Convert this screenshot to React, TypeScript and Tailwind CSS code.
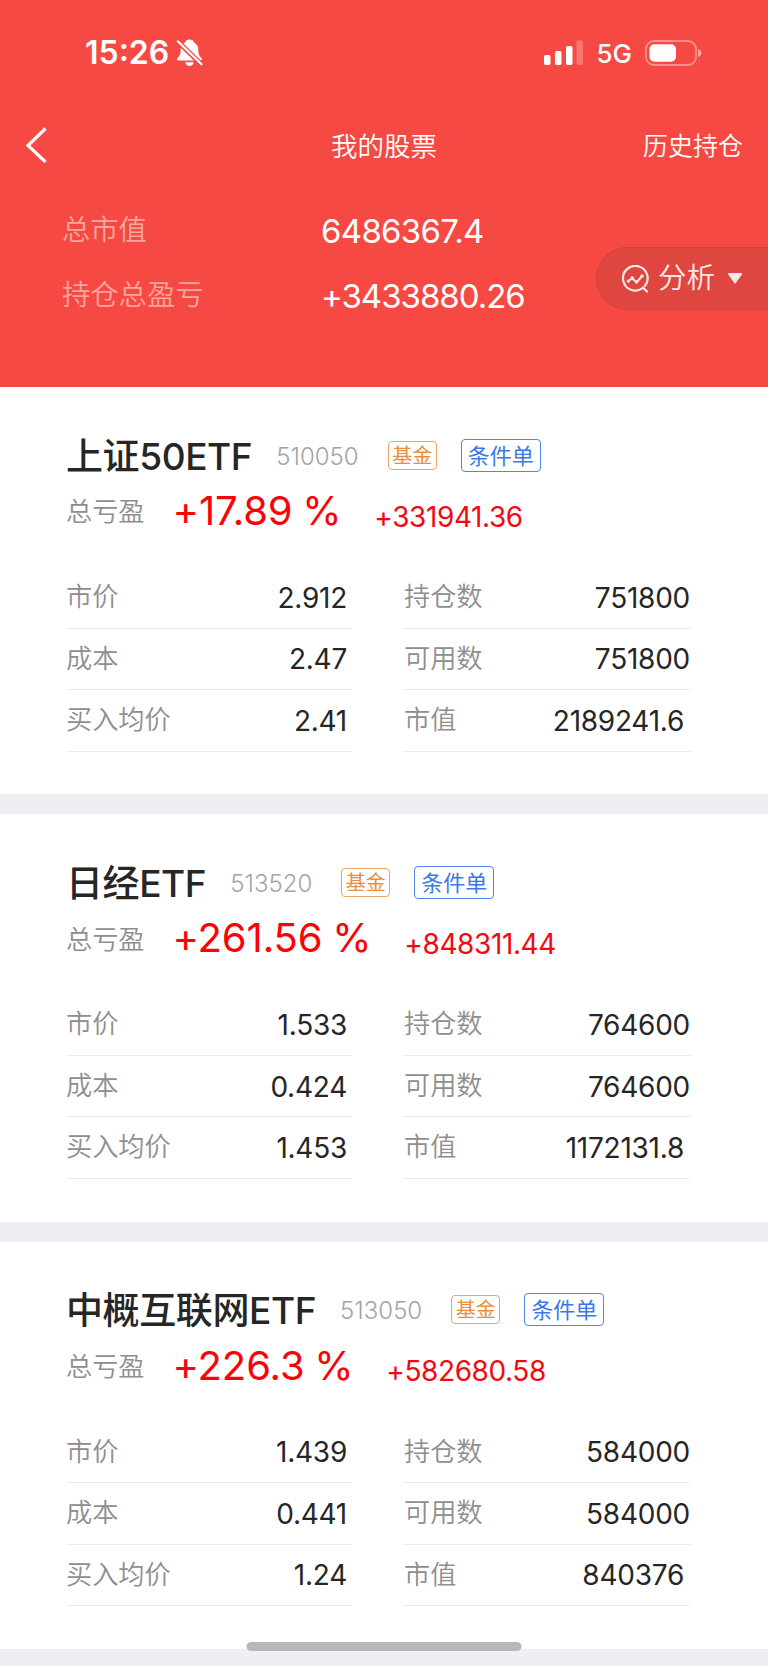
import clsx from 'clsx'

type Holding = {
  name: string
  code: string
  percent: string
  profit: string
  left: [string, string][]
  right: [string, string][]
}

const holdings: Holding[] = [
  {
    name: '上证50ETF',
    code: '510050',
    percent: '+17.89 %',
    profit: '+331941.36',
    left: [['市价', '2.912'], ['成本', '2.47'], ['买入均价', '2.41']],
    right: [['持仓数', '751800'], ['可用数', '751800'], ['市值', '2189241.6']],
  },
  {
    name: '日经ETF',
    code: '513520',
    percent: '+261.56 %',
    profit: '+848311.44',
    left: [['市价', '1.533'], ['成本', '0.424'], ['买入均价', '1.453']],
    right: [['持仓数', '764600'], ['可用数', '764600'], ['市值', '1172131.8']],
  },
  {
    name: '中概互联网ETF',
    code: '513050',
    percent: '+226.3 %',
    profit: '+582680.58',
    left: [['市价', '1.439'], ['成本', '0.441'], ['买入均价', '1.24']],
    right: [['持仓数', '584000'], ['可用数', '584000'], ['市值', '840376']],
  },
]

function StatusBar() {
  return (
    <div className="flex h-[105px] items-center pl-[85px] pr-[66px]">
      <span className="text-[32px] font-semibold leading-none">15:26</span>
      <svg className="ml-[7px]" width="27" height="28" viewBox="0 0 27 28">
        <path
          d="M13.500 .5c-2.300 0-4.100 1.300-4.600 3.100C6 5.200 4.700 7.800 4.700 11c0 4.600-1.200 6-3 7.800-1 1-.7 2.700.9 2.700h21.800c1.600 0 1.900-1.700.9-2.700-1.800-1.800-3-3.200-3-7.800 0-3.200-1.300-5.800-4.200-7.400C17.600 1.800 15.800.5 13.500.5Z"
          fill="#fff"
        />
        <path d="M9.300 23.300h8.400c-.3 2.200-2 3.700-4.200 3.700s-3.900-1.500-4.200-3.700Z" fill="#fff" />
        <path d="M0 .8 27 27" stroke="#f64944" strokeWidth="5" />
        <path d="M1.800 2.300 25.500 25.300" stroke="#fff" strokeWidth="2.200" strokeLinecap="round" />
      </svg>
      <svg className="ml-auto" width="39" height="26" viewBox="0 0 39 26" fill="#fff">
        <rect x="0" y="15" width="6.500" height="10" rx="1.800" />
        <rect x="11" y="11" width="6.500" height="14" rx="1.800" />
        <rect x="22" y="6" width="6.500" height="19" rx="1.800" />
        <rect x="32.500" y="0.500" width="6.500" height="24.500" rx="1.800" opacity="0.25" />
      </svg>
      <span className="ml-[13px] pt-0.5 text-[26px] font-medium leading-none">5G</span>
      <svg className="ml-[13px]" width="57" height="26" viewBox="0 0 57 26" fill="none">
        <rect x="1" y="1" width="50" height="24" rx="8" stroke="#fff" strokeOpacity="0.4" strokeWidth="1.800" />
        <rect x="4.500" y="4.300" width="26.500" height="17.500" rx="5" fill="#fff" />
        <path d="M53 9c2 .5 3.400 2 3.400 4S55 16.500 53 17Z" fill="#fff" fillOpacity="0.5" />
      </svg>
    </div>
  )
}

function NavBar() {
  return (
    <div className="grid h-20 grid-cols-3 items-center pl-[25px] pr-[25px]">
      <svg width="22" height="36" viewBox="0 0 22 36" fill="none" stroke="#fff" strokeWidth="3.200">
        <path d="M20.500 1.500 3 18.500l17.500 16.500" />
      </svg>
      <span className="pt-0.5 text-center text-[26.500px] font-[350] leading-none">我的股票</span>
      <span className="pt-[3px] text-right text-[25px] font-[350] leading-none">历史持仓</span>
    </div>
  )
}

function AnalyzeButton() {
  return (
    <button className="mt-[62px] flex h-[63px] w-[172px] items-center rounded-l-full border border-r-0 border-[#d5403b] bg-[#df463f] pl-[24px] text-[#ffe9e7]">
      <svg width="28" height="28" viewBox="0 0 28 28" fill="none" stroke="currentColor" strokeWidth="2.200" strokeLinecap="round" strokeLinejoin="round">
        <path d="M21.500 23.200A12.300 12.300 0 1 1 24 20.800M22 22.500l4 4" />
        <path d="m7.300 16.200 3.700-3 4.500 4 5.500-6" strokeWidth="2" />
        <circle cx="7.300" cy="16.200" r="1.200" fill="currentColor" strokeWidth="1" />
        <circle cx="11.200" cy="12.800" r="1.200" fill="currentColor" strokeWidth="1" />
        <circle cx="15.500" cy="17" r="1.200" fill="currentColor" strokeWidth="1" />
        <circle cx="21" cy="11" r="1.200" fill="currentColor" strokeWidth="1" />
      </svg>
      <span className="ml-[9px] text-[28.500px] font-[350] leading-none">分析</span>
      <svg className="ml-[13px]" width="14" height="11" viewBox="0 0 14 11" fill="currentColor">
        <path d="M1 0h12a1 1 0 0 1 .8 1.500L7.800 10a1 1 0 0 1-1.600 0L.2 1.500A1 1 0 0 1 1 0Z" />
      </svg>
    </button>
  )
}

function Summary() {
  return (
    <div className="flex justify-between pl-[62px]">
      <dl className="grid grid-cols-[259px_auto] pt-[14px]">
        <dt className="text-[28.300px] font-[350] leading-[63px] text-[#fba59f]">总市值</dt>
        <dd className="text-[33px] leading-[65px] tracking-[-0.7px]">6486367.4</dd>
        <dt className="text-[28.300px] font-[350] leading-[63px] text-[#fba59f]">持仓总盈亏</dt>
        <dd className="text-[33px] leading-[65px] tracking-[-1px]">+3433880.26</dd>
      </dl>
      <AnalyzeButton />
    </div>
  )
}

function Rows({ rows, right }: { rows: [string, string][]; right?: boolean }) {
  return (
    <div>
      {rows.map(([label, value]) => (
        <div key={label} className="flex h-[61.500px] items-center justify-between border-b border-[#ececec]">
          <span
            className={clsx(
              'text-[26.200px] font-[350] leading-none text-[#8e8e8e]',
              right ? 'pl-px' : '-ml-px',
            )}
          >
            {label}
          </span>
          <span
            className={clsx(
              'pt-px text-[28px] leading-none tracking-[-0.25px] text-[#262626]',
              !right && 'pr-[5px]',
              right && (label === '市值' ? 'pr-[7px]' : 'pr-px'),
            )}
          >
            {value}
          </span>
        </div>
      ))}
    </div>
  )
}

function HoldingCard({ item }: { item: Holding }) {
  return (
    <section className="h-[427.300px] border-b-[20.300px] border-[#efeff3] bg-white pl-[67px] pr-[77px] pt-[46px]">
      <div className="flex h-11 items-center">
        <h2 className="-ml-px pt-0.5 text-[37px] font-medium leading-none tracking-[-0.4px] text-[#262626]">{item.name}</h2>
        <span className="ml-[24px] pt-[3px] text-[24px] font-light leading-none text-[#a4a4a4]">{item.code}</span>
        <span className="ml-[29px] flex h-[29px] w-[49px] items-center justify-center rounded-[4px] border border-[#eda45f] pt-px text-[20px] leading-none text-[#e88d3c]">
          基金
        </span>
        <span className="ml-[24px] flex h-[33px] w-[80px] items-center justify-center rounded-[4px] border border-[#4e86ee] pt-px text-[22px] leading-none text-[#3c78ea]">
          条件单
        </span>
      </div>
      <div className="mt-1 flex h-[60px] items-center">
        <span className="-ml-px pt-[3px] text-[26.200px] font-[350] leading-none text-[#8e8e8e]">总亏盈</span>
        <span className="ml-[28px] text-[40px] leading-none tracking-[-0.1px] text-[#fb0207] [word-spacing:-1.500px]">
          {item.percent}
        </span>
        <span className="ml-[33px] pt-[11px] text-[28px] leading-none tracking-[-0.4px] text-[#f00a12]">{item.profit}</span>
      </div>
      <div className="mt-[26px] grid grid-cols-[285px_288px] justify-between">
        <Rows rows={item.left} />
        <Rows rows={item.right} right />
      </div>
    </section>
  )
}

export default function App() {
  return (
    <div className="relative h-[1666px] w-[768px] overflow-hidden bg-[#efeff3] font-['Inter','Noto_Sans_CJK_SC',sans-serif]">
      <header className="h-[387px] bg-[#f64944] text-white">
        <StatusBar />
        <NavBar />
        <Summary />
      </header>
      <main>
        {holdings.map((item) => (
          <HoldingCard key={item.code} item={item} />
        ))}
      </main>
      {/* home indicator */}
      <div className="absolute bottom-[15px] left-1/2 h-[9px] w-[275px] -translate-x-1/2 rounded-full bg-[#b8b8b8]" />
    </div>
  )
}
